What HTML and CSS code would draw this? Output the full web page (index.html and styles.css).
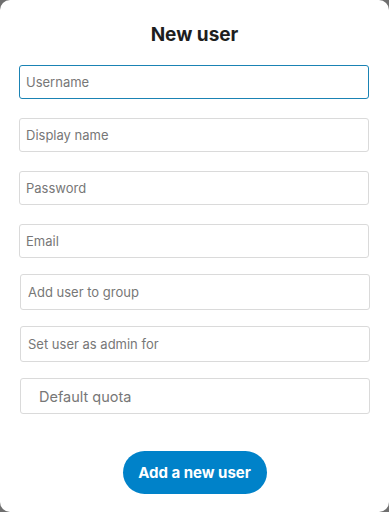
FILE: index.html
```html
<!DOCTYPE html>
<html>
<head>
<meta charset="utf-8">
<link rel="stylesheet" href="styles.css">
</head>
<body>
<div class="modal">
  <h2 class="title">New user</h2>
  <form class="form">
    <div class="group top">
      <input class="field focused" placeholder="Username">
      <input class="field" placeholder="Display name">
      <input class="field" placeholder="Password">
      <input class="field" placeholder="Email">
    </div>
    <div class="group bottom">
      <input class="field alt" placeholder="Add user to group">
      <input class="field alt" placeholder="Set user as admin for">
      <input class="field alt quota" placeholder="Default quota">
    </div>
    <div class="actions">
      <button type="button" class="submit">Add a new user</button>
    </div>
  </form>
</div>
</body>
</html>
```

FILE: styles.css
```css
html, body {
  margin: 0;
  padding: 0;
  background: #6f6f6f;
  width: 389px;
  height: 512px;
  overflow: hidden;
}
.modal {
  width: 389px;
  height: 512px;
  background: #fff;
  border-radius: 10px;
  box-sizing: border-box;
  padding-top: 24px;
  font-family: Inter, "Noto Sans", sans-serif;
}
.title {
  margin: 0;
  height: 22px;
  line-height: 22px;
  font-size: 19px;
  font-weight: 700;
  text-align: center;
  color: #1e1e1e;
}
.form {
  display: flex;
  flex-direction: column;
  margin-top: 19px;
}
.group {
  display: flex;
  flex-direction: column;
}
.group.top {
  padding: 0 20px 0 19px;
  gap: 19px;
}
.group.bottom {
  margin-top: 16px;
  padding: 0 19px 0 20px;
  gap: 16px;
}
.field {
  display: block;
  box-sizing: border-box;
  width: 100%;
  height: 34px;
  margin: 0;
  border: 1px solid #dadada;
  border-radius: 3px;
  padding: 0 6px;
  font-family: Inter, "Noto Sans", sans-serif;
  font-size: 13px;
  color: #222;
  background: #fff;
  outline: none;
}
.field.alt {
  height: 36px;
  padding-left: 7px;
}
.field.quota {
  padding-left: 18px;
  font-size: 14.5px;
}
.field.focused {
  border-color: #1a83b4;
}
.field::placeholder {
  color: #777;
}
.actions {
  display: flex;
  justify-content: center;
  margin-top: 37px;
}
.submit {
  width: 144px;
  height: 43px;
  border: none;
  border-radius: 22px;
  background: #0082c9;
  color: #fff;
  font-family: Inter, "Noto Sans", sans-serif;
  font-size: 15px;
  font-weight: 700;
  padding: 0;
}
```
